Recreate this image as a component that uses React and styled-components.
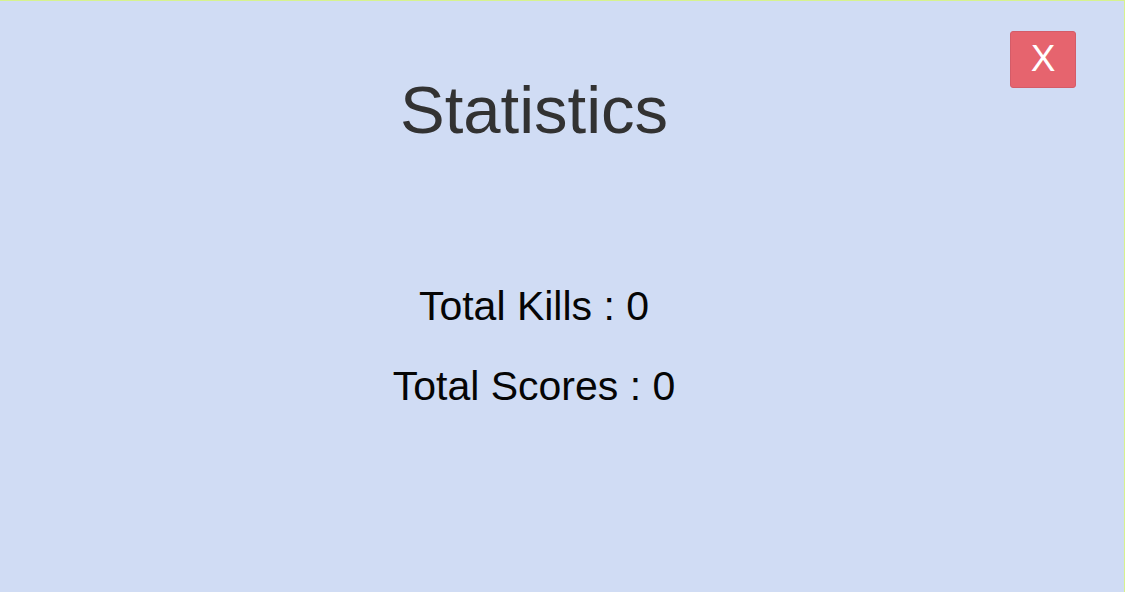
import React from 'react';
import styled, { createGlobalStyle } from 'styled-components';

const GlobalStyle = createGlobalStyle`
  html, body {
    margin: 0;
    padding: 0;
    background: #d0dcf4;
  }
  body {
    font-family: "Liberation Sans", Arial, sans-serif;
  }
`;

const Screen = styled.div`
  position: relative;
  box-sizing: border-box;
  width: 1125px;
  height: 592px;
  overflow: hidden;
  background: #d0dcf4;
  border-top: 1px solid #d6f28e;
  border-right: 1px solid #d6f28e;
`;

// the lighter stretch on the right edge
const EdgeGap = styled.div`
  position: absolute;
  right: -1px;
  top: 255px;
  width: 1px;
  height: 158px;
  background: #e4ebf8;
`;

const Content = styled.main`
  width: 1068px;
  display: flex;
  flex-direction: column;
  align-items: center;
  padding-top: 75px;
`;

const Title = styled.h1`
  margin: 0;
  font-size: 67px;
  line-height: 1;
  font-weight: 400;
  color: #323232;
`;

const StatList = styled.div`
  display: flex;
  flex-direction: column;
  align-items: center;
  gap: 39px;
  margin-top: 143px;
`;

const StatLine = styled.p`
  margin: 0;
  font-size: 41px;
  line-height: 1;
  color: #050505;
`;

const CloseButton = styled.button`
  position: absolute;
  top: 30px;
  left: 1010px;
  width: 66px;
  height: 57px;
  box-sizing: border-box;
  display: flex;
  align-items: center;
  justify-content: center;
  padding: 0 0 2px 0;
  background: #e6646e;
  border: 1px solid #d45c68;
  border-radius: 3px;
  color: #ffffff;
  font-family: "Liberation Sans", Arial, sans-serif;
  font-size: 37px;
  line-height: 1;
  cursor: pointer;
`;

const stats = [
  { label: 'Total Kills', value: 0 },
  { label: 'Total Scores', value: 0 },
];

const App = () => {
  return (
    <>
      <GlobalStyle />
      <Screen>
        <Content>
          <Title>Statistics</Title>
          <StatList>
            {stats.map((s) => (
              <StatLine key={s.label}>
                {s.label} : {s.value}
              </StatLine>
            ))}
          </StatList>
        </Content>
        <CloseButton>X</CloseButton>
        <EdgeGap />
      </Screen>
    </>
  );
};

export default App;
